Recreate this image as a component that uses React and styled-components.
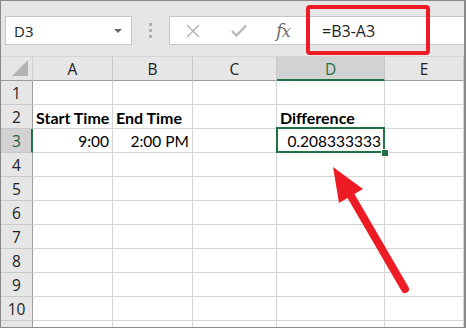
import React from "react";
import styled, { createGlobalStyle } from "styled-components";

const GlobalStyle = createGlobalStyle`
  html, body {
    margin: 0;
    padding: 0;
    background: #ffffff;
  }
  * {
    box-sizing: border-box;
  }
`;

const COLUMNS = ["A", "B", "C", "D", "E"];
const WIDTHS = "32px 80px 80px 84px 108px 1fr";

const CELLS = {
  "2": { A: { text: "Start Time", bold: true }, B: { text: "End Time", bold: true }, D: { text: "Difference", bold: true } },
  "3": { A: { text: "9:00", right: true }, B: { text: "2:00 PM", right: true }, D: { text: "0.208333333", right: true, active: true } },
};

// row 11 only peeks out under the frame, its number is hidden
const ROWS = ["1", "2", "3", "4", "5", "6", "7", "8", "9", "10", ""];

const App = () => {
  return (
    <Frame>
      <GlobalStyle />
      <FormulaBar>
        <NameBox>
          <span>D3</span>
          <Caret />
        </NameBox>
        <Grip>
          <i />
          <i />
          <i />
        </Grip>
        <FormulaInput>
          <ToolIcon>
            <svg width="14" height="14" viewBox="0 0 14 14">
              <path d="M1 1 L13 13 M13 1 L1 13" stroke="#b8b8b8" strokeWidth="1.6" fill="none" />
            </svg>
          </ToolIcon>
          <ToolIcon>
            <svg width="16" height="13" viewBox="0 0 16 13">
              <path d="M1 7 L5.5 11.5 L15 1.5" stroke="#b8b8b8" strokeWidth="2.4" fill="none" />
            </svg>
          </ToolIcon>
          <Fx>
            <em>f</em>x
          </Fx>
          <FormulaText>=B3-A3</FormulaText>
        </FormulaInput>
        <Highlight />
      </FormulaBar>

      <Sheet>
        <Grid>
          <Corner>
            <svg width="17" height="17" viewBox="0 0 17 17">
              <polygon points="16,0 16,16 0,16" fill="#b4b4b4" />
            </svg>
          </Corner>
          {COLUMNS.map((c) => (
            <ColHead key={c} $active={c === "D"}>
              {c}
            </ColHead>
          ))}
          {ROWS.map((r, i) => (
            <React.Fragment key={i}>
              <RowHead $active={r === "3"}>{r}</RowHead>
              {COLUMNS.map((c) => {
                const cell = CELLS[r] && CELLS[r][c];
                return (
                  <Cell key={c} $bold={cell?.bold} $right={cell?.right} $active={cell?.active}>
                    {cell?.text}
                    {cell?.active && <FillHandle />}
                  </Cell>
                );
              })}
            </React.Fragment>
          ))}
        </Grid>
        <Arrow width="466" height="270" viewBox="0 0 466 270">
          <line x1="405" y1="232" x2="351" y2="139" stroke="#ed1c24" strokeWidth="8" strokeLinecap="round" />
          <polygon points="333,110 363,132 339,146" fill="#ed1c24" />
        </Arrow>
      </Sheet>
    </Frame>
  );
};

const Frame = styled.div`
  position: relative;
  width: 466px;
  height: 328px;
  border: 1px solid #8a8a8a;
  border-right-width: 2px;
  overflow: hidden;
  background: #ffffff;
  display: flex;
  flex-direction: column;
`;

const FormulaBar = styled.div`
  position: relative;
  height: 56px;
  flex: none;
  background: #e6e6e6;
  border-bottom: 1px solid #d6d6d6;
  display: flex;
  align-items: flex-start;
  padding: 15px 0 0 4px;
`;

const NameBox = styled.div`
  width: 127px;
  height: 29px;
  background: #ffffff;
  border: 1px solid #c6c6c6;
  display: flex;
  align-items: center;
  justify-content: space-between;
  padding: 0 9px 0 8px;
  font-family: "Open Sans", "Noto Sans", sans-serif;
  font-size: 15px;
  color: #222222;
`;

const Caret = styled.div`
  width: 0;
  height: 0;
  border-left: 4px solid transparent;
  border-right: 4px solid transparent;
  border-top: 4px solid #6a6a6a;
`;

const Grip = styled.div`
  width: 37px;
  height: 29px;
  display: flex;
  flex-direction: column;
  align-items: center;
  justify-content: center;
  gap: 3px;

  i {
    display: block;
    width: 3px;
    height: 3px;
    background: #b0b0b0;
  }
`;

const FormulaInput = styled.div`
  flex: 1;
  height: 29px;
  background: #ffffff;
  border: 1px solid #c6c6c6;
  border-right: none;
  display: flex;
  align-items: center;
  padding-left: 16px;
`;

const ToolIcon = styled.div`
  width: 45px;
  display: flex;
  align-items: center;
  justify-content: flex-start;
`;

const Fx = styled.div`
  width: 46px;
  font-family: "DejaVu Serif", "Liberation Serif", serif;
  font-style: italic;
  font-size: 16px;
  color: #707070;
  letter-spacing: -1px;

  em {
    font-size: 18px;
  }
`;

const FormulaText = styled.div`
  font-family: "Open Sans", "Noto Sans", sans-serif;
  font-size: 16px;
  color: #222222;
`;

const Highlight = styled.div`
  position: absolute;
  left: 305px;
  top: 4px;
  width: 124px;
  height: 50px;
  border: 4px solid #ed1c24;
  border-radius: 4px;
`;

const Sheet = styled.div`
  position: relative;
  flex: 1;
  overflow: hidden;
`;

const Grid = styled.div`
  display: grid;
  grid-template-columns: ${WIDTHS};
  grid-auto-rows: 24px;
`;

const HeadBase = styled.div`
  background: #e6e6e6;
  font-family: "Open Sans", "Noto Sans", sans-serif;
  font-size: 15.5px;
  color: #222222;
  display: flex;
  align-items: center;
  justify-content: center;
`;

const Corner = styled(HeadBase)`
  border-right: 1px solid #d0d0d0;
  border-bottom: 1px solid #9e9e9e;
  align-items: flex-end;
  justify-content: flex-end;
  padding: 0 3px 3px 0;
`;

const ColHead = styled(HeadBase)`
  border-right: 1px solid #c8c8c8;
  border-bottom: ${(p) => (p.$active ? "2px solid #217346" : "1px solid #9e9e9e")};
  background: ${(p) => (p.$active ? "#d2d2d2" : "#e6e6e6")};
  color: ${(p) => (p.$active ? "#217346" : "#222222")};
  padding-top: ${(p) => (p.$active ? "1px" : "0")};
`;

const RowHead = styled(HeadBase)`
  border-bottom: 1px solid #c8c8c8;
  border-right: ${(p) => (p.$active ? "2px solid #217346" : "1px solid #9e9e9e")};
  background: ${(p) => (p.$active ? "#d2d2d2" : "#e6e6e6")};
  color: ${(p) => (p.$active ? "#1d5e3a" : "#222222")};
  padding-left: ${(p) => (p.$active ? "1px" : "0")};
`;

const Cell = styled.div`
  position: relative;
  border-right: 1px solid #d4d4d4;
  border-bottom: 1px solid #d4d4d4;
  display: flex;
  align-items: center;
  justify-content: ${(p) => (p.$right ? "flex-end" : "flex-start")};
  padding: 1px 3px 0 3px;
  font-family: Lato, "Noto Sans", sans-serif;
  font-size: ${(p) => (p.$bold ? "16px" : "15.5px")};
  font-weight: ${(p) => (p.$bold ? 700 : 400)};
  color: #000000;
  white-space: nowrap;
  overflow: visible;
  z-index: ${(p) => (p.$active ? 2 : 1)};

  ${(p) =>
    p.$active &&
    `
    &::after {
      content: "";
      position: absolute;
      top: -2px;
      left: -1px;
      right: -1px;
      bottom: -1px;
      border: 2px solid #217346;
      pointer-events: none;
    }
  `}
`;

const FillHandle = styled.span`
  position: absolute;
  right: -4px;
  bottom: -4px;
  width: 6px;
  height: 6px;
  background: #217346;
  outline: 1px solid #ffffff;
  z-index: 3;
`;

const Arrow = styled.svg`
  position: absolute;
  left: -1px;
  top: 0;
  pointer-events: none;
  z-index: 5;
`;

export default App;
